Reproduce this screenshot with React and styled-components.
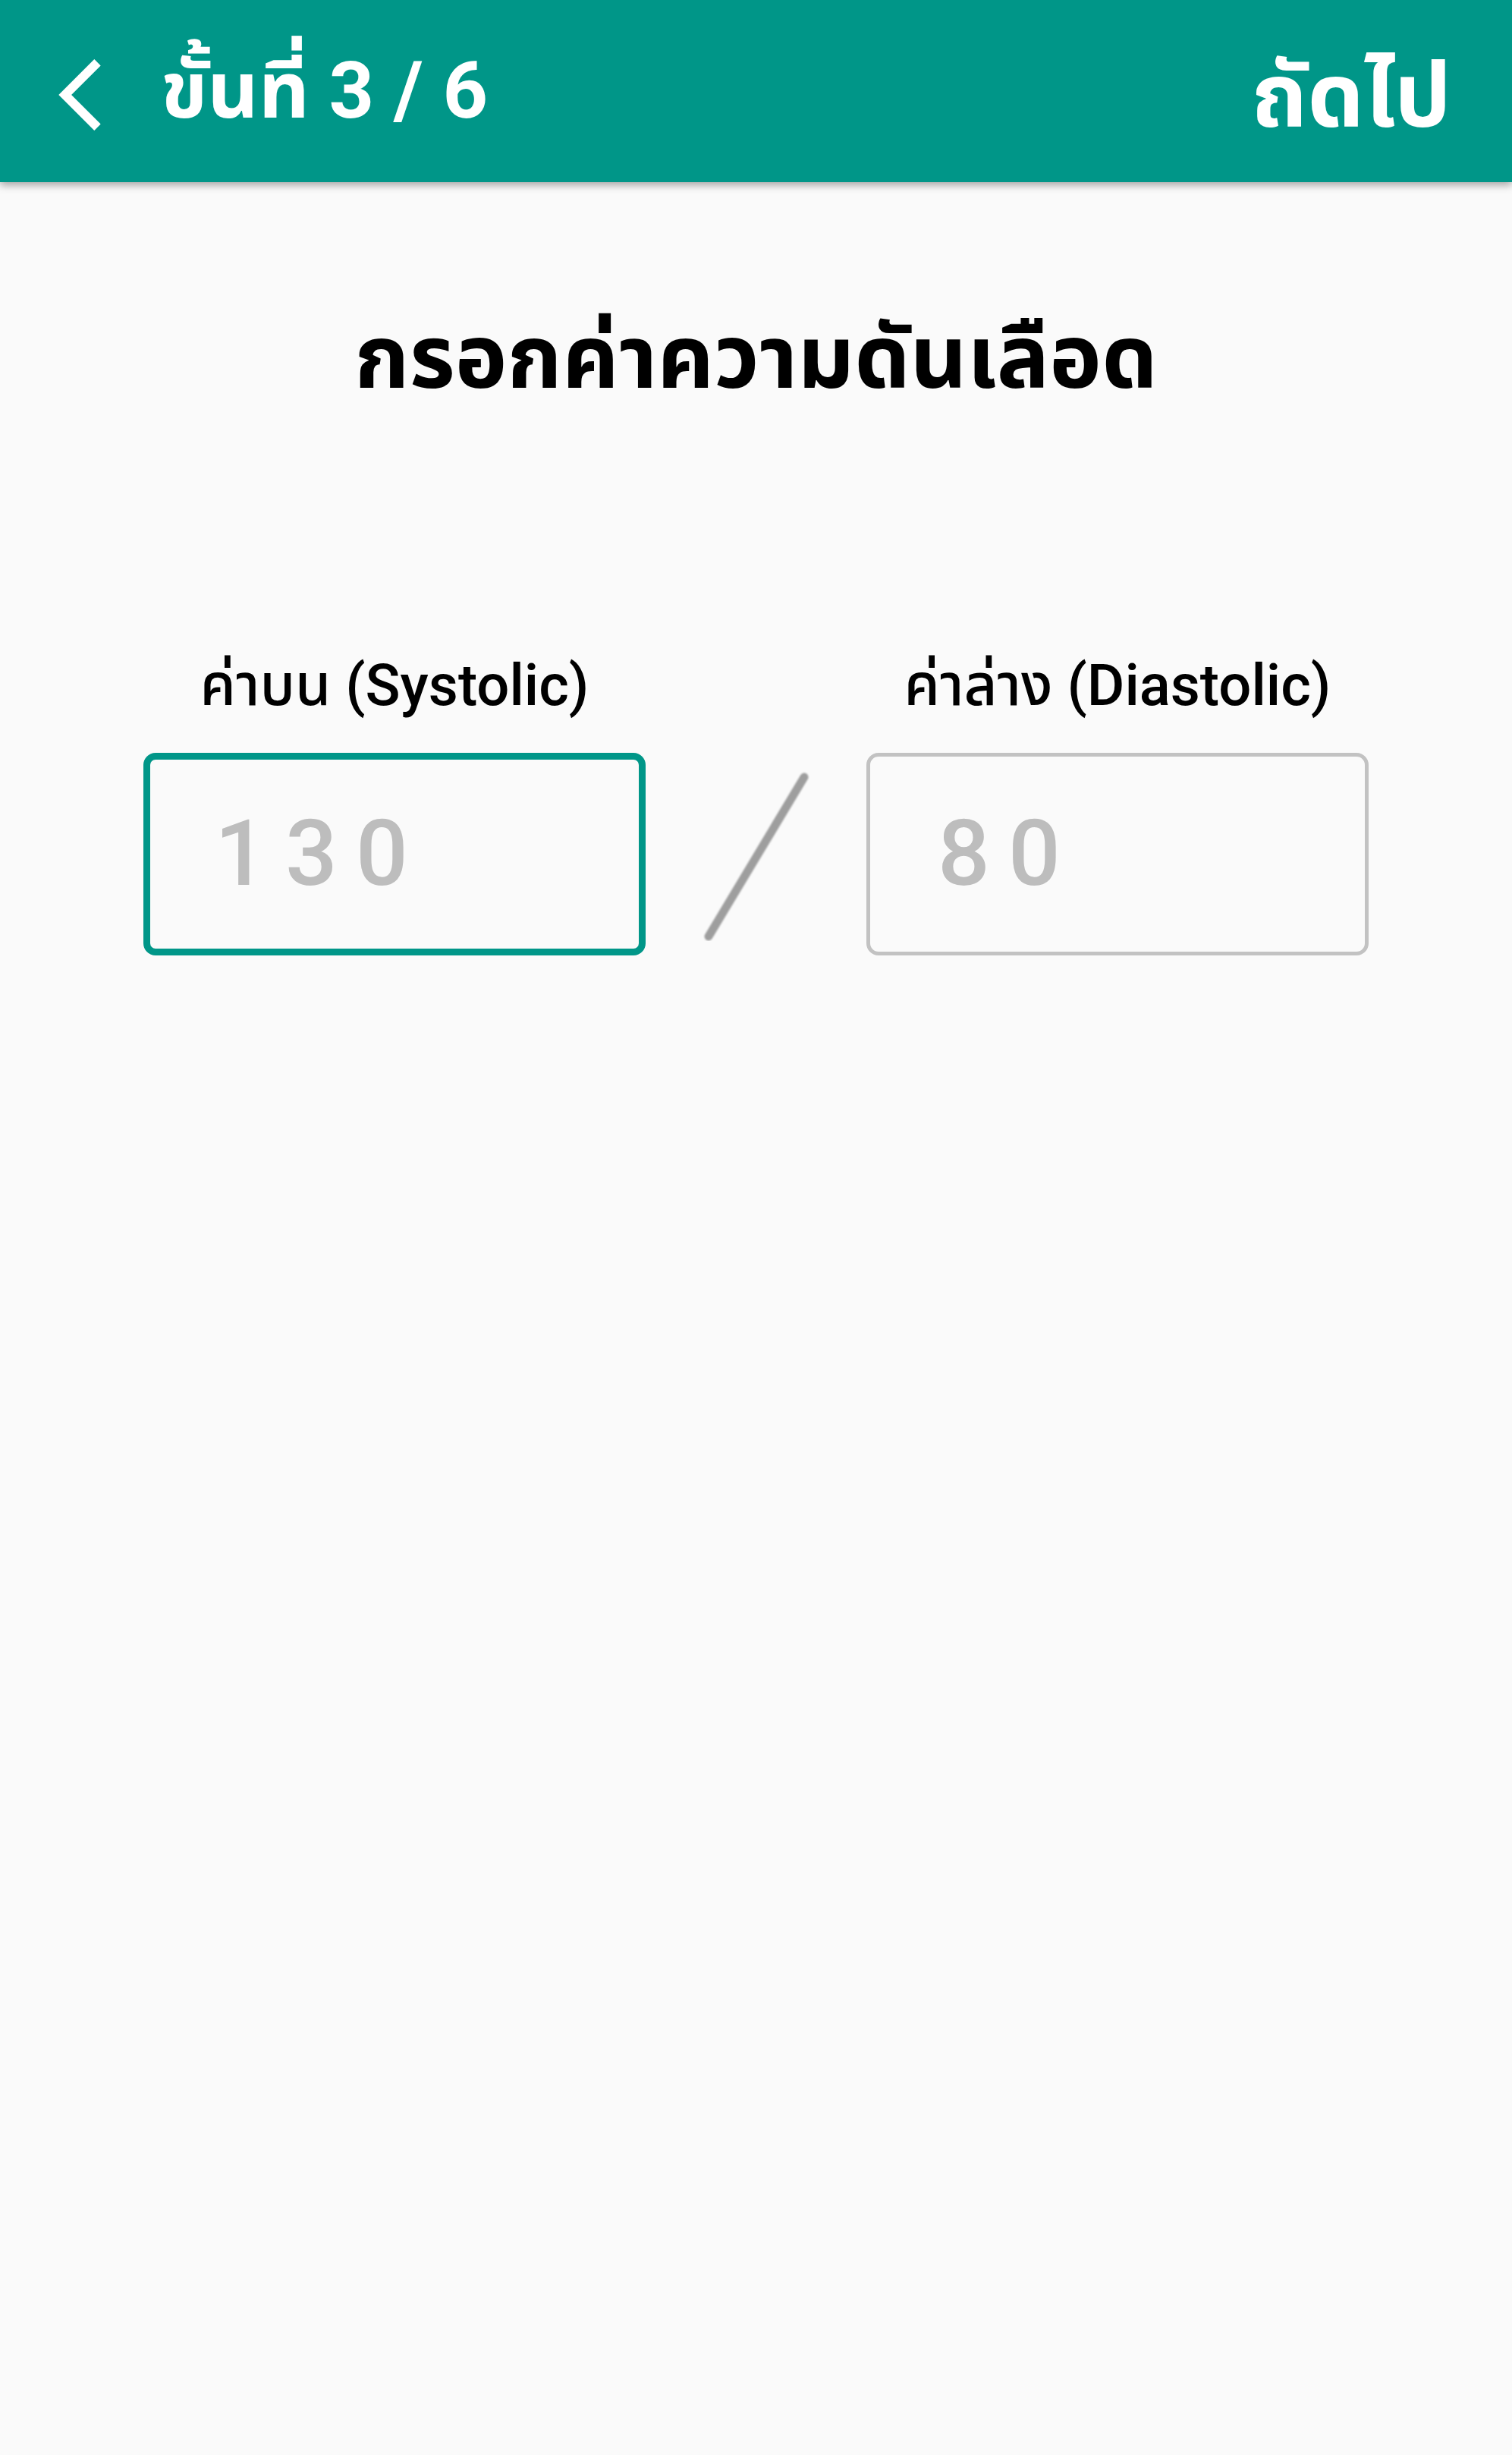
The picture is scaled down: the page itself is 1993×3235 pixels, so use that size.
import React from 'react';
import styled, { createGlobalStyle } from 'styled-components';

const GlobalStyle = createGlobalStyle`
  html, body {
    margin: 0;
    padding: 0;
    background: #fafafa;
  }
  body {
    font-family: Roboto, "Noto Sans Thai", "Noto Sans Thai UI", "Noto Sans", sans-serif;
  }
`;

const Page = styled.div`
  width: 1993px;
  min-height: 3235px;
  background: #fafafa;
`;

const TopBar = styled.header`
  height: 240px;
  background: #009688;
  display: flex;
  align-items: center;
  padding: 0 80px 0 77px;
  box-sizing: border-box;
  box-shadow: 0 4px 10px rgba(0, 0, 0, 0.35);
  color: #fff;
  position: relative;
  z-index: 1;
`;

const BackButton = styled.button`
  border: none;
  background: none;
  padding: 0;
  margin: 10px 0 0 0;
  display: flex;
  cursor: pointer;
`;

const StepTitle = styled.h1`
  margin: 0 0 0 79px;
  font-size: 104px;
  font-weight: 700;
  line-height: 1;
  flex: 1;
`;

const NextButton = styled.button`
  border: none;
  background: none;
  padding: 0;
  margin-top: 12px;
  color: #fff;
  font-family: inherit;
  font-size: 118px;
  font-weight: 700;
  line-height: 1;
  cursor: pointer;
`;

const Content = styled.main`
  padding-top: 150px;
  display: flex;
  flex-direction: column;
  align-items: center;
`;

const Heading = styled.h2`
  margin: 0;
  font-size: 116px;
  font-weight: 700;
  color: #000;
  line-height: 1.4;
`;

const Fields = styled.div`
  margin-top: 306px;
  display: flex;
  align-items: flex-end;
`;

const Field = styled.label`
  display: flex;
  flex-direction: column;
  align-items: center;
  width: 662px;
`;

const FieldLabel = styled.span`
  font-size: 76px;
  font-weight: 500;
  color: #000;
  line-height: 1.2;
  margin-bottom: 42px;
`;

const NumberInput = styled.input`
  width: 662px;
  height: 267px;
  box-sizing: border-box;
  border: ${(p) => (p.$focused ? '9px solid #009688' : '5px solid #c2c2c2')};
  border-radius: 16px;
  background: transparent;
  padding: 0 0 0 ${(p) => (p.$focused ? '85px' : '89px')};
  font-family: Roboto, sans-serif;
  font-size: 121px;
  font-weight: 500;
  letter-spacing: 0.2em;
  color: #333;
  outline: none;

  &::placeholder {
    color: #bdbdbd;
  }
`;

const Divider = styled.div`
  width: 291px;
  height: 267px;
  display: flex;
  align-items: center;
  justify-content: center;
`;

const ChevronLeft = () => (
  <svg width="56" height="94" viewBox="0 0 11.67 19.8" fill="#fff">
    <path d="M11.67 1.77L9.9 0 0 9.9l9.9 9.9 1.77-1.77L3.54 9.9z" />
  </svg>
);

const SlashMark = () => (
  <svg width="140" height="230" viewBox="0 0 140 230">
    <defs>
      <filter id="soft" x="-20%" y="-20%" width="140%" height="140%">
        <feGaussianBlur stdDeviation="1.2" />
      </filter>
    </defs>
    <line x1="133" y1="14" x2="7" y2="224" stroke="#9e9e9e" strokeWidth="11" strokeLinecap="round" filter="url(#soft)" />
  </svg>
);

const App = () => {
  return (
    <Page>
      <GlobalStyle />
      <TopBar>
        <BackButton aria-label="back">
          <ChevronLeft />
        </BackButton>
        <StepTitle>ขั้นที่ 3 / 6</StepTitle>
        <NextButton>ถัดไป</NextButton>
      </TopBar>
      <Content>
        <Heading>กรอกค่าความดันเลือด</Heading>
        <Fields>
          <Field>
            <FieldLabel>ค่าบน (Systolic)</FieldLabel>
            <NumberInput $focused placeholder="130" inputMode="numeric" />
          </Field>
          <Divider>
            <SlashMark />
          </Divider>
          <Field>
            <FieldLabel>ค่าล่าง (Diastolic)</FieldLabel>
            <NumberInput placeholder="80" inputMode="numeric" />
          </Field>
        </Fields>
      </Content>
    </Page>
  );
};

export default App;
